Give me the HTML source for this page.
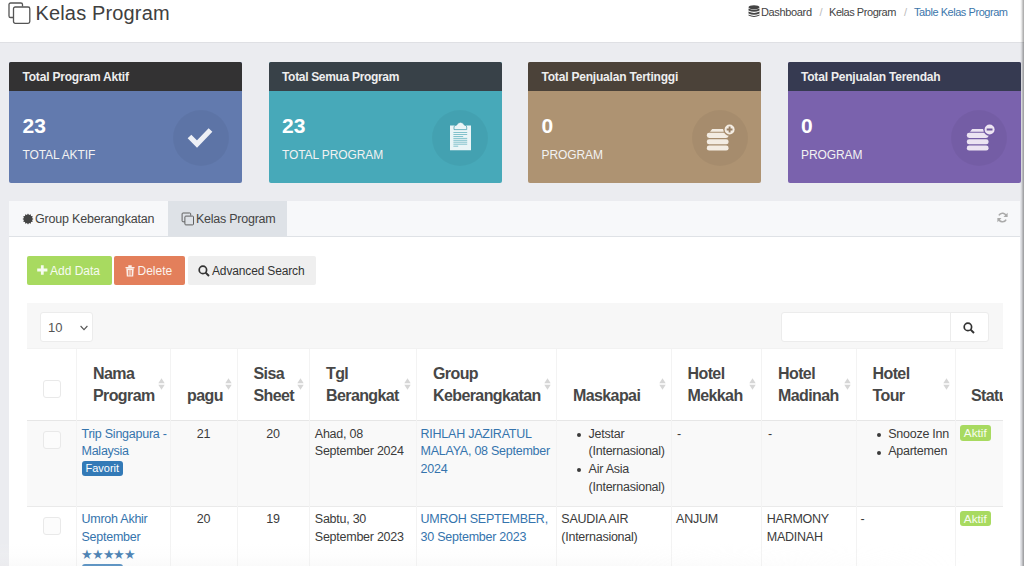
<!DOCTYPE html>
<html><head><meta charset="utf-8">
<style>
*{box-sizing:border-box;margin:0;padding:0}
html,body{width:1024px;height:566px;overflow:hidden;background:#ebecf0;font-family:"Liberation Sans",sans-serif;color:#444}
.a{position:absolute;white-space:nowrap}
#hdr{position:absolute;left:0;top:0;width:1024px;height:43px;background:#fff;border-bottom:1px solid #dfe0e4}
.card{position:absolute;top:62px;width:233px;height:120.7px;border-radius:2px;overflow:hidden}
.card .ch{position:absolute;left:0;top:0;width:100%;height:29px}
.card .t{position:absolute;left:13.5px;top:7.5px;font-size:12px;font-weight:bold;line-height:14px;color:#eee;letter-spacing:-0.2px}
.card .n{position:absolute;left:13.5px;top:51.5px;font-size:21px;font-weight:bold;line-height:24px;color:#fff}
.card .l{position:absolute;left:13.5px;top:86px;font-size:12px;line-height:14px;color:#f2f2f2;letter-spacing:-0.1px}
.card .c{position:absolute;left:163.5px;top:47.5px;width:56px;height:56px;border-radius:50%;background:rgba(0,0,0,0.045)}
.card svg{position:absolute}
.hd{font-size:16px;font-weight:bold;line-height:22.5px;color:#474747;letter-spacing:-0.6px}
.bd{font-size:12.5px;line-height:17.7px;color:#3b3b3b;letter-spacing:-0.25px}
.lk{color:#3574ad}
</style></head><body>
<div id="hdr"></div>
<!-- title icon -->
<svg class="a" style="left:8px;top:1px" width="24" height="24" viewBox="0 0 24 24">
 <path d="M14.5 5.5 V3.6 A1.6 1.6 0 0 0 12.9 2 H2.6 A1.6 1.6 0 0 0 1 3.6 V14.9 A1.6 1.6 0 0 0 2.6 16.5 H5.5" fill="none" stroke="#555" stroke-width="1.3"/>
 <rect x="5.5" y="6" width="16.3" height="16.3" rx="1.7" fill="none" stroke="#555" stroke-width="1.3"/>
</svg>
<div class="a" style="left:35.5px;top:1px;font-size:20px;line-height:24px;color:#404040;letter-spacing:0.15px">Kelas Program</div>
<!-- breadcrumb -->
<svg class="a" style="left:748px;top:5px" width="12" height="13" viewBox="0 0 12 13">
 <ellipse cx="6" cy="2.3" rx="5.5" ry="2.1" fill="#444"/>
 <path d="M0.5 3.6 Q6 6.4 11.5 3.6 V5.4 Q6 8.2 0.5 5.4Z" fill="#444"/>
 <path d="M0.5 6.6 Q6 9.4 11.5 6.6 V8.4 Q6 11.2 0.5 8.4Z" fill="#444"/>
 <path d="M0.5 9.6 Q6 12.4 11.5 9.6 V10.6 Q6 13.4 0.5 10.6Z" fill="#444"/>
</svg>
<div class="a" style="left:761px;top:5px;font-size:11px;line-height:14px;color:#444;letter-spacing:-0.35px">Dashboard</div>
<div class="a" style="left:819.5px;top:5px;font-size:11px;line-height:14px;color:#bbb">/</div>
<div class="a" style="left:829px;top:5px;font-size:11px;line-height:14px;color:#444;letter-spacing:-0.45px">Kelas Program</div>
<div class="a" style="left:904px;top:5px;font-size:11px;line-height:14px;color:#bbb">/</div>
<div class="a" style="left:914px;top:5px;font-size:11px;line-height:14px;color:#3c76ab;letter-spacing:-0.45px">Table Kelas Program</div>

<!-- cards -->
<div class="card" style="left:9px;background:#627aae">
 <div class="ch" style="background:#333233"></div>
 <div class="t">Total Program Aktif</div>
 <div class="n">23</div>
 <div class="l">TOTAL AKTIF</div>
 <div class="c"></div>
 <svg style="left:178px;top:64px" width="26" height="22" viewBox="0 0 26 22"><path d="M2.5 10.5 L10 18 L23.5 4" fill="none" stroke="#eef0f6" stroke-width="5.2"/></svg>
</div>
<div class="card" style="left:268.5px;background:#47a9b9">
 <div class="ch" style="background:#384148"></div>
 <div class="t" style="letter-spacing:-0.32px">Total Semua Program</div>
 <div class="n">23</div>
 <div class="l">TOTAL PROGRAM</div>
 <div class="c"></div>
 <svg style="left:181px;top:60px" width="22" height="29" viewBox="0 0 22 29">
  <path d="M0 3.5 H21 V28.3 H0Z" fill="#eaf5f7"/>
  <path d="M4 7.6 V5 Q4 3.2 6.5 3.2 Q7.8 0.3 10.5 0.3 Q13.2 0.3 14.5 3.2 Q16.7 3.2 16.7 5 V7.6Z" fill="#eaf5f7" stroke="#3d98a8" stroke-width="0.7"/>
  <g stroke="#5fb0be" stroke-width="0.75"><path d="M3.4 10.5H17.2M3.4 12.5H17.2M3.4 14.5H13.2M3.4 16.4H17.2M3.4 18.3H17.2M3.4 20.2H17.2M3.4 22.2H17.2M3.4 24.2H8.2"/></g>
 </svg>
</div>
<div class="card" style="left:528px;background:#ae9372">
 <div class="ch" style="background:#4b4239"></div>
 <div class="t">Total Penjualan Tertinggi</div>
 <div class="n">0</div>
 <div class="l">PROGRAM</div>
 <div class="c"></div>
 <svg style="left:176px;top:60px" width="34" height="30" viewBox="0 0 34 30">
  <path d="M6 9.8 L8.2 7 H19.2 L21.4 9.8Z" fill="#f3ece2"/>
  <rect x="2.8" y="10.7" width="21.8" height="5.2" rx="2.4" fill="#f3ece2"/>
  <rect x="2.8" y="17.2" width="21.8" height="5.1" rx="2.4" fill="#f3ece2"/>
  <rect x="2.8" y="23.5" width="21.8" height="5.1" rx="2.4" fill="#f3ece2"/>
  <circle cx="25.6" cy="7.5" r="6.3" fill="#a68b6b"/>
  <circle cx="25.6" cy="7.5" r="5.0" fill="#f3ece2"/>
  <path d="M25.6 4.6V10.4M22.7 7.5H28.5" stroke="#9a8064" stroke-width="1.9"/>
 </svg>
</div>
<div class="card" style="left:787.5px;background:#7a62ad">
 <div class="ch" style="background:#363a51"></div>
 <div class="t">Total Penjualan Terendah</div>
 <div class="n">0</div>
 <div class="l">PROGRAM</div>
 <div class="c"></div>
 <svg style="left:176px;top:60px" width="34" height="30" viewBox="0 0 34 30">
  <path d="M6 9.8 L8.2 7 H19.2 L21.4 9.8Z" fill="#ece4f2"/>
  <rect x="2.8" y="10.7" width="21.8" height="5.2" rx="2.4" fill="#ece4f2"/>
  <rect x="2.8" y="17.2" width="21.8" height="5.1" rx="2.4" fill="#ece4f2"/>
  <rect x="2.8" y="23.5" width="21.8" height="5.1" rx="2.4" fill="#ece4f2"/>
  <circle cx="25.6" cy="7.5" r="6.3" fill="#7259a5"/>
  <circle cx="25.6" cy="7.5" r="5.0" fill="#ece4f2"/>
  <path d="M22.7 7.5H28.5" stroke="#6c559c" stroke-width="1.9"/>
 </svg>
</div>

<!-- PANEL -->
<div style="position:absolute;left:9px;top:201px;width:1011px;height:365px;background:#fff"></div>
<div style="position:absolute;left:9px;top:201px;width:1011px;height:36px;background:#f7f8fa;border-bottom:1px solid #dfe2e6"></div>
<div style="position:absolute;left:167.5px;top:201px;width:119px;height:35px;background:#dee2e7"></div>
<svg class="a" style="left:21.5px;top:212.5px" width="12" height="12" viewBox="0 0 12 12"><polygon points="6.00,0.50 7.09,1.94 8.75,1.24 8.97,3.03 10.76,3.25 10.06,4.91 11.50,6.00 10.06,7.09 10.76,8.75 8.97,8.97 8.75,10.76 7.09,10.06 6.00,11.50 4.91,10.06 3.25,10.76 3.03,8.97 1.24,8.75 1.94,7.09 0.50,6.00 1.94,4.91 1.24,3.25 3.03,3.03 3.25,1.24 4.91,1.94" fill="#444"/></svg>
<div class="a" style="left:35px;top:211.8px;font-size:12.5px;line-height:14px;color:#444;letter-spacing:-0.2px">Group Keberangkatan</div>
<svg class="a" style="left:180.5px;top:211.5px" width="14" height="14" viewBox="0 0 14 14">
 <path d="M9.7 3.6 V1.9 A0.9 0.9 0 0 0 8.8 1 H2 A0.9 0.9 0 0 0 1.1 1.9 V8.9 A0.9 0.9 0 0 0 2 9.8 H3.8" fill="none" stroke="#5a5a5a" stroke-width="0.95"/>
 <rect x="3.9" y="4.1" width="8.6" height="8.8" rx="0.9" fill="none" stroke="#5a5a5a" stroke-width="0.95"/>
</svg>
<div class="a" style="left:196px;top:211.8px;font-size:12.5px;line-height:14px;color:#444;letter-spacing:-0.25px">Kelas Program</div>
<svg class="a" style="left:997px;top:212px" width="11" height="11" viewBox="0 0 11 11">
 <path d="M9.3 4.3 A4 4 0 0 0 1.9 3.3" fill="none" stroke="#aaa" stroke-width="1.6"/>
 <path d="M1.7 6.7 A4 4 0 0 0 9.1 7.7" fill="none" stroke="#aaa" stroke-width="1.6"/>
 <path d="M10.6 0.8 V4.9 H6.5Z" fill="#aaa"/><path d="M0.4 10.2 V6.1 H4.5Z" fill="#aaa"/>
</svg>

<!-- buttons -->
<div style="position:absolute;left:27px;top:256px;width:84.5px;height:29px;background:#a8da60;border-radius:2px"></div>
<svg class="a" style="left:37px;top:265.3px" width="11" height="10" viewBox="0 0 11 10"><path d="M5.3 0.3V9.7M0.2 5H10.4" stroke="#f6fbef" stroke-width="2.8"/></svg>
<div class="a" style="left:50px;top:264px;font-size:12px;line-height:14px;color:#f7fbf2">Add Data</div>
<div style="position:absolute;left:114px;top:256px;width:70.5px;height:29px;background:#e37f5b;border-radius:2px"></div>
<svg class="a" style="left:125px;top:265px" width="10" height="12" viewBox="0 0 10 12">
 <path d="M0.5 2H9.5V3.2H0.5Z M3.3 0.3H6.7V2H3.3Z M1.3 3.6H8.7L8.2 11.6H1.8Z" fill="#fbeee8"/>
 <path d="M3.6 5V10.5M5 5V10.5M6.4 5V10.5" stroke="#e37f5b" stroke-width="0.8"/>
</svg>
<div class="a" style="left:137.5px;top:264px;font-size:12px;line-height:14px;color:#fcf3ee">Delete</div>
<div style="position:absolute;left:187.5px;top:256px;width:128.5px;height:29px;background:#efefef;border-radius:2px"></div>
<svg class="a" style="left:198px;top:264.5px" width="12" height="12" viewBox="0 0 12 12"><circle cx="4.9" cy="4.9" r="3.7" fill="none" stroke="#333" stroke-width="1.7"/><path d="M7.6 7.6L11 11" stroke="#333" stroke-width="2"/></svg>
<div class="a" style="left:212px;top:264px;font-size:12px;line-height:14px;color:#333;letter-spacing:-0.15px">Advanced Search</div>

<!-- table wrapper -->
<div style="position:absolute;left:27px;top:303px;width:976px;height:263px;background:#f7f7f7"></div>
<div style="position:absolute;left:39.8px;top:311.6px;width:53px;height:30px;background:#fff;border:1px solid #ececec;border-radius:3px"></div>
<div class="a" style="left:48px;top:320.5px;font-size:13px;line-height:14px;color:#555">10</div>
<svg class="a" style="left:80px;top:324.5px" width="8" height="6" viewBox="0 0 8 6"><path d="M0.6 1L4 4.6L7.4 1" fill="none" stroke="#555" stroke-width="1.1"/></svg>
<div style="position:absolute;left:780.5px;top:312px;width:208.5px;height:30px;background:#fff;border:1px solid #ececec;border-radius:3px"></div>
<div style="position:absolute;left:949.5px;top:313px;width:1px;height:28px;background:#ececec"></div>
<svg class="a" style="left:963px;top:322px" width="12" height="12" viewBox="0 0 12 12"><circle cx="4.9" cy="4.9" r="3.7" fill="none" stroke="#333" stroke-width="1.7"/><path d="M7.6 7.6L11 11" stroke="#333" stroke-width="2"/></svg>

<!--TABLE-->
<div style="position:absolute;left:27px;top:348px;width:976px;height:72px;background:#fff;border-top:1px solid #f2f2f2"></div>
<div style="position:absolute;left:27px;top:420px;width:976px;height:86px;background:#f9f9f9;border-top:1px solid #e6e6e6"></div>
<div style="position:absolute;left:27px;top:506px;width:976px;height:60px;background:#fff;border-top:1px solid #eaeaea"></div>
<div style="position:absolute;left:76px;top:349px;width:1px;height:217px;background:#f3f3f3"></div>
<div style="position:absolute;left:170px;top:349px;width:1px;height:217px;background:#f3f3f3"></div>
<div style="position:absolute;left:237px;top:349px;width:1px;height:217px;background:#f3f3f3"></div>
<div style="position:absolute;left:309px;top:349px;width:1px;height:217px;background:#f3f3f3"></div>
<div style="position:absolute;left:416px;top:349px;width:1px;height:217px;background:#f3f3f3"></div>
<div style="position:absolute;left:556px;top:349px;width:1px;height:217px;background:#f3f3f3"></div>
<div style="position:absolute;left:671px;top:349px;width:1px;height:217px;background:#f3f3f3"></div>
<div style="position:absolute;left:761px;top:349px;width:1px;height:217px;background:#f3f3f3"></div>
<div style="position:absolute;left:856px;top:349px;width:1px;height:217px;background:#f3f3f3"></div>
<div style="position:absolute;left:955px;top:349px;width:1px;height:217px;background:#f3f3f3"></div>
<div class="a hd" style="left:93px;top:362.71px">Nama</div>
<div class="a hd" style="left:93px;top:385.21px">Program</div>
<svg class="a" style="left:158px;top:377.5px" width="7" height="12" viewBox="0 0 7 12"><path d="M3.5 0.3L6.7 5.2H0.3Z M3.5 11.7L6.7 6.8H0.3Z" fill="#d6d6d6"/></svg>
<div class="a hd" style="left:187px;top:385.21px">pagu</div>
<svg class="a" style="left:225px;top:377.5px" width="7" height="12" viewBox="0 0 7 12"><path d="M3.5 0.3L6.7 5.2H0.3Z M3.5 11.7L6.7 6.8H0.3Z" fill="#d6d6d6"/></svg>
<div class="a hd" style="left:253.5px;top:362.71px">Sisa</div>
<div class="a hd" style="left:253.5px;top:385.21px">Sheet</div>
<svg class="a" style="left:297px;top:377.5px" width="7" height="12" viewBox="0 0 7 12"><path d="M3.5 0.3L6.7 5.2H0.3Z M3.5 11.7L6.7 6.8H0.3Z" fill="#d6d6d6"/></svg>
<div class="a hd" style="left:326px;top:362.71px">Tgl</div>
<div class="a hd" style="left:326px;top:385.21px">Berangkat</div>
<svg class="a" style="left:404px;top:377.5px" width="7" height="12" viewBox="0 0 7 12"><path d="M3.5 0.3L6.7 5.2H0.3Z M3.5 11.7L6.7 6.8H0.3Z" fill="#d6d6d6"/></svg>
<div class="a hd" style="left:433px;top:362.71px">Group</div>
<div class="a hd" style="left:433px;top:385.21px">Keberangkatan</div>
<svg class="a" style="left:544px;top:377.5px" width="7" height="12" viewBox="0 0 7 12"><path d="M3.5 0.3L6.7 5.2H0.3Z M3.5 11.7L6.7 6.8H0.3Z" fill="#d6d6d6"/></svg>
<div class="a hd" style="left:573px;top:385.21px">Maskapai</div>
<svg class="a" style="left:659px;top:377.5px" width="7" height="12" viewBox="0 0 7 12"><path d="M3.5 0.3L6.7 5.2H0.3Z M3.5 11.7L6.7 6.8H0.3Z" fill="#d6d6d6"/></svg>
<div class="a hd" style="left:687.5px;top:362.71px">Hotel</div>
<div class="a hd" style="left:687.5px;top:385.21px">Mekkah</div>
<svg class="a" style="left:749px;top:377.5px" width="7" height="12" viewBox="0 0 7 12"><path d="M3.5 0.3L6.7 5.2H0.3Z M3.5 11.7L6.7 6.8H0.3Z" fill="#d6d6d6"/></svg>
<div class="a hd" style="left:778px;top:362.71px">Hotel</div>
<div class="a hd" style="left:778px;top:385.21px">Madinah</div>
<svg class="a" style="left:844px;top:377.5px" width="7" height="12" viewBox="0 0 7 12"><path d="M3.5 0.3L6.7 5.2H0.3Z M3.5 11.7L6.7 6.8H0.3Z" fill="#d6d6d6"/></svg>
<div class="a hd" style="left:872.5px;top:362.71px">Hotel</div>
<div class="a hd" style="left:872.5px;top:385.21px">Tour</div>
<svg class="a" style="left:943px;top:377.5px" width="7" height="12" viewBox="0 0 7 12"><path d="M3.5 0.3L6.7 5.2H0.3Z M3.5 11.7L6.7 6.8H0.3Z" fill="#d6d6d6"/></svg>
<div class="a hd" style="left:971px;top:385.21px">Status</div>
<div style="position:absolute;left:42.5px;top:430.5px;width:18.5px;height:18px;border:1px solid #e9e9e9;border-radius:3px;background:#fcfcfc"></div>
<div style="position:absolute;left:42.5px;top:516.5px;width:18.5px;height:18px;border:1px solid #e9e9e9;border-radius:3px;background:#fcfcfc"></div>
<div style="position:absolute;left:42.5px;top:380px;width:18.5px;height:18px;border:1px solid #e9e9e9;border-radius:3px;background:#fff"></div>
<div class="a bd lk" style="left:81.5px;top:425.72px">Trip Singapura -</div>
<div class="a bd lk" style="left:81.5px;top:443.42px">Malaysia</div>
<div style="position:absolute;left:81.5px;top:461px;width:41.5px;height:14.7px;background:#337ab7;border-radius:3px"></div>
<div class="a" style="left:85.5px;top:461.2px;font-size:11px;line-height:14.5px;color:#fff">Favorit</div>
<div class="a bd" style="left:170px;width:67px;text-align:center;top:425.72px">21</div>
<div class="a bd" style="left:237px;width:72px;text-align:center;top:425.72px">20</div>
<div class="a bd" style="left:314.8px;top:425.72px">Ahad, 08</div>
<div class="a bd" style="left:314.8px;top:443.42px">September 2024</div>
<div class="a bd lk" style="left:420.6px;top:425.72px">RIHLAH JAZIRATUL</div>
<div class="a bd lk" style="left:420.6px;top:443.42px">MALAYA, 08 September</div>
<div class="a bd lk" style="left:420.6px;top:461.12px">2024</div>
<div class="a bd" style="left:588.6px;top:425.72px">Jetstar</div>
<div class="a bd" style="left:588.6px;top:443.42px">(Internasional)</div>
<div class="a bd" style="left:588.6px;top:461.12px">Air Asia</div>
<div class="a bd" style="left:588.6px;top:478.82px">(Internasional)</div>
<div style="position:absolute;left:577.1px;top:432.80px;width:4.2px;height:4.2px;border-radius:50%;background:#3b3b3b"></div>
<div style="position:absolute;left:577.1px;top:468.20px;width:4.2px;height:4.2px;border-radius:50%;background:#3b3b3b"></div>
<div class="a bd" style="left:677px;top:425.72px">-</div>
<div class="a bd" style="left:768px;top:425.72px">-</div>
<div class="a bd" style="left:888.2px;top:425.72px">Snooze Inn</div>
<div class="a bd" style="left:888.2px;top:443.42px">Apartemen</div>
<div style="position:absolute;left:876.5px;top:432.80px;width:4.2px;height:4.2px;border-radius:50%;background:#3b3b3b"></div>
<div style="position:absolute;left:876.5px;top:450.50px;width:4.2px;height:4.2px;border-radius:50%;background:#3b3b3b"></div>
<div style="position:absolute;left:960.3px;top:425.3px;width:31px;height:15.3px;background:#a8da60;border-radius:3px"></div>
<div class="a" style="left:963.8px;top:426.1px;font-size:11.8px;line-height:15.3px;color:#f7fcef">Aktif</div>
<div class="a bd lk" style="left:81.5px;top:511.32px">Umroh Akhir</div>
<div class="a bd lk" style="left:81.5px;top:529.02px">September</div>
<div class="a" style="left:81px;top:548.40px;font-size:13px;line-height:14px;color:#2f6ea8;letter-spacing:-1.2px">&#9733;&#9733;&#9733;&#9733;&#9733;</div>
<div style="position:absolute;left:81.5px;top:564.40px;width:41.5px;height:14.5px;background:#337ab7;border-radius:3px"></div>
<div class="a bd" style="left:170px;width:67px;text-align:center;top:511.32px">20</div>
<div class="a bd" style="left:237px;width:72px;text-align:center;top:511.32px">19</div>
<div class="a bd" style="left:314.8px;top:511.32px">Sabtu, 30</div>
<div class="a bd" style="left:314.8px;top:529.02px">September 2023</div>
<div class="a bd lk" style="left:420.6px;top:511.32px">UMROH SEPTEMBER,</div>
<div class="a bd lk" style="left:420.6px;top:529.02px">30 September 2023</div>
<div class="a bd" style="left:561.3px;top:511.32px">SAUDIA AIR</div>
<div class="a bd" style="left:561.3px;top:529.02px">(Internasional)</div>
<div class="a bd" style="left:676.1px;top:511.32px">ANJUM</div>
<div class="a bd" style="left:766.8px;top:511.32px">HARMONY</div>
<div class="a bd" style="left:766.8px;top:529.02px">MADINAH</div>
<div class="a bd" style="left:860.5px;top:511.32px">-</div>
<div style="position:absolute;left:960.3px;top:511.2px;width:31px;height:15.3px;background:#a8da60;border-radius:3px"></div>
<div class="a" style="left:963.8px;top:512.0px;font-size:11.8px;line-height:15.3px;color:#f7fcef">Aktif</div>
<div style="position:absolute;left:1003px;top:303px;width:17px;height:263px;background:#fff"></div>
<div style="position:absolute;left:0;top:540px;width:1020px;height:26px;background:linear-gradient(180deg,rgba(250,250,250,0) 0,rgba(250,250,250,0.15) 50%,rgba(236,236,236,0.25) 100%);-webkit-mask-image:linear-gradient(90deg,#000 0,#000 60%,transparent 95%)"></div>
<div style="position:absolute;left:1020px;top:0;width:4px;height:566px;background:linear-gradient(90deg,rgba(0,0,0,0) 0,rgba(0,0,0,0.06) 30%,rgba(0,0,0,0.2) 60%,rgba(0,0,0,0.36) 100%)"></div>
</body></html>
